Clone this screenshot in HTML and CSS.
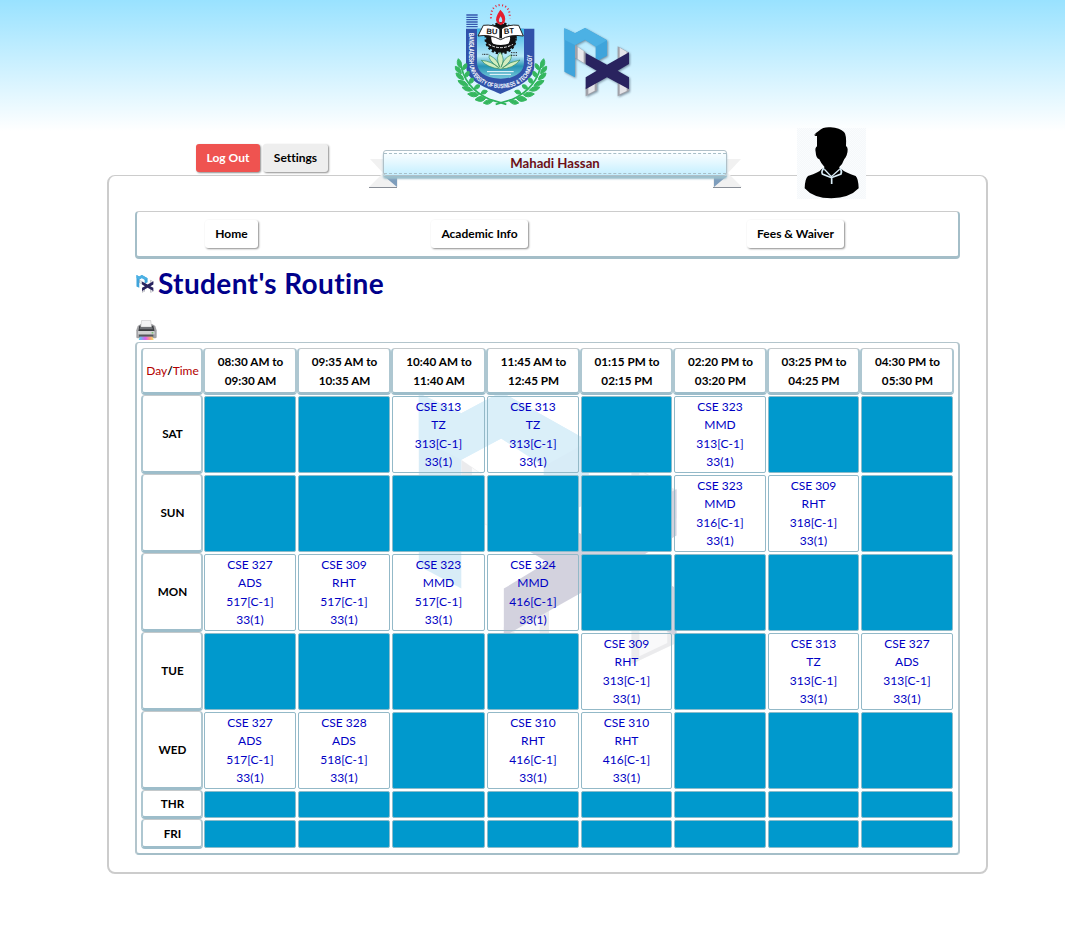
FILE: index.html
```
<!DOCTYPE html>
<html lang="en">
<head>
<meta charset="utf-8">
<title>Student's Routine</title>
<link rel="stylesheet" href="styles.css">
</head>
<body>
<svg class="defs" width="0" height="0" aria-hidden="true">
  <defs>
    <linearGradient id="silver"><stop offset="0" stop-color="#a5a5ad"/><stop offset=".55" stop-color="#f4f4f6"/><stop offset="1" stop-color="#aaaab2"/></linearGradient>
    <symbol id="nx" viewBox="18 17 196 207">
      <path fill="#a0a1a9" d="M50 68 82 90V125L50 106Z"/><path fill="#e9e9ec" d="M58 74 76 86V121L58 110Z"/>
      <path fill="#a0a1a9" d="M178 72 212 91V112L178 128ZM82 194 116 174V205L82 222ZM178 174 212 192V206L178 222Z"/>
      <path fill="#e4e4e8" d="M184 76 205 88V112L184 123ZM90 194 109 183V205L90 215ZM184 180 205 191V206L184 216Z"/>
      <path fill="#3fa4db" d="M18 18 50 33 80 17 146 54V100L112 118V72L80 52 50 68V165L18 148Z"/>
      <path fill="#4cb1e4" d="M18 18 50 33 80 17 146 54 112 73 80 52 50 68 18 52Z"/>
      <path fill="#29235f" d="M82 92 146 127 212 90V125L178 145 212 165V201L146 165 82 201V165L115 145 82 126Z"/>
    </symbol>
  </defs>
</svg>

<header class="banner">
  <svg class="crest" viewBox="0 0 294 330">
    <defs>
      <linearGradient id="sky" x2="0" y2="1"><stop offset="0" stop-color="#36b3e5"/><stop offset=".55" stop-color="#b9e9f8"/><stop offset=".75" stop-color="#2795b5"/><stop offset="1" stop-color="#75c7da"/></linearGradient>
      <path id="curve" d="M52 99V185C52 291 240 291 240 185V99"/>
    </defs>
    <g stroke="#3557ae" stroke-width="4"><path d="M43 45H77M43 52H77M43 59H77M43 66H77M43 73H77M43 80H77"/></g>
    <path fill="#3152aa" d="M42 86H247V195C247 243 199 258 145 282C91 258 42 243 42 195Z"/>
    <path fill="url(#sky)" d="M75 86H216V187C216 220 185 236 146 236S75 220 75 187Z"/>
    <circle cx="146" cy="115" r="36" fill="#fff" stroke="#111" stroke-width="15"/>
    <circle cx="146" cy="115" r="45" fill="none" stroke="#111" stroke-width="7" stroke-dasharray="7 6"/>
    <path fill="#111" d="M101 121Q146 149 192 121L187 139Q147 164 106 139Z"/>
    <path fill="none" stroke="#fff" stroke-width="3" stroke-dasharray="8 4" d="M110 133Q146 153 183 133"/>
    <path fill="#fff" stroke="#222" stroke-width="3" d="M94 76Q124 72 145 88Q169 72 200 76L214 108Q174 102 146 119Q114 102 78 108Z"/>
    <path stroke="#111" stroke-width="8" d="M146 85V115"/>
    <text class="crest-name" x="103" y="101" transform="rotate(4 104 99)">BU</text><text class="crest-name" x="156" y="102" transform="rotate(-4 156 100)">BT</text>
    <path fill="#d3edbf" stroke="#2f8a5c" stroke-width="2" d="M145 207Q105 203 88 181Q119 184 140 203Q105 178 112 165Q139 180 143 202Q129 169 145 157Q161 176 147 202Q155 174 178 164Q181 184 151 204Q175 184 204 180Q184 206 145 207Z"/>
    <path stroke="#f5fcff" stroke-width="3" d="M105 215H185M113 223H177"/>
    <path stroke="#222" stroke-width="3" stroke-dasharray="3 2" d="M91 163H110M177 158H197M177 166H195"/>
    <path fill="#e51d2f" d="M145 29Q165 48 158 67Q146 84 134 66Q127 55 145 29ZM146 49Q135 63 146 69Q156 63 146 49Z" fill-rule="evenodd"/>
    <path fill="none" stroke="#e82236" stroke-width="6" stroke-dasharray="3 7" d="M117 55Q115 18 145 15Q176 18 173 55"/>
    <g fill="none" stroke="#2cb35a" stroke-width="5"><path d="M25 185Q35 265 115 299L163 313M269 185Q257 265 179 299L131 313"/></g>
    <g id="leaves" fill="#35b75f" stroke="#35b75f" stroke-width="3">
      <path d="M25 204Q10 192 19 176Q33 187 25 204ZM28 221Q8 216 10 199Q28 203 28 221ZM35 239Q13 237 12 219Q32 221 35 239ZM48 257Q26 260 18 242Q39 238 48 257ZM62 271Q44 279 30 262Q50 254 62 271ZM80 284Q66 298 47 282Q65 270 80 284ZM101 295Q90 311 69 299Q83 282 101 295ZM31 211Q31 192 44 191Q48 205 31 211ZM38 232Q38 214 51 214Q55 230 38 232ZM51 250Q51 232 64 235Q68 250 51 250ZM67 267Q69 251 83 255Q83 269 67 267ZM87 281Q91 265 106 273Q102 285 87 281ZM122 303Q110 319 94 309Q105 295 122 303Z"/>
    </g>
    <use href="#leaves" transform="translate(294 0) scale(-1 1)"/>
    <text class="crest-motto"><textPath href="#curve" textLength="382" lengthAdjust="spacingAndGlyphs">BANGLADESH UNIVERSITY OF BUSINESS &amp; TECHNOLOGY</textPath></text>
  </svg>
  <svg class="brand"><use href="#nx"/></svg>
</header>

<div class="account">
  <button class="btn btn-danger">Log Out</button>
  <button class="btn btn-muted">Settings</button>
  <div class="ribbon">
    <svg class="ribbon-tails" viewBox="0 0 373 39">
      <path fill="#f1f1f1" d="M1 9H29V37H0L14 23ZM372 9H344V37H373L359 23Z"/>
      <path fill="#7e9dbc" d="M15 26H28V37ZM358 26H345V37Z"/>
      <path stroke="#888d96" d="M0 37.5H28M344 37.5H372"/>
    </svg>
    <div class="ribbon-face"><span>Mahadi Hassan</span></div>
  </div>
  <svg class="portrait" viewBox="0 0 207 213">
    <defs><pattern id="hatch" width="6" height="6" patternUnits="userSpaceOnUse"><path d="M0 0 6 6" stroke="#eaf0f4" stroke-width="1"/></pattern></defs>
    <path fill="#fafcfe" d="M0 0H207V213H0Z"/><path fill="url(#hatch)" d="M0 0H207V213H0Z"/>
    <path d="M51 22Q56 14 66 8Q79-4 101-2Q129 0 141 12Q149 20 147 54Q156 60 149 82Q145 91 142 93Q137 108 127 117V121L134 124Q144 134 176 144Q184 151 185 181Q158 210 103 211Q49 211 23 181Q24 151 33 144Q67 134 73 124L82 119V116Q72 107 67 94Q57 91 56 72Q53 60 60 55V24L52 24L58 19Z"/>
    <path fill="none" stroke="#dceff9" stroke-width="5" d="M81 120Q72 130 76 138L103 149 132 138Q136 130 129 121M104 148V168"/>
    <path fill="none" stroke="#dceff9" stroke-width="4" d="M82 124 103 146 128 124"/>
  </svg>
</div>

<main class="panel">
  <nav class="menu">
    <button class="btn btn-home">Home</button>
    <button class="btn btn-academic">Academic Info</button>
    <button class="btn btn-fees">Fees &amp; Waiver</button>
  </nav>
  <h1 class="title"><svg class="title-icon"><use href="#nx"/></svg><span>Student's Routine</span></h1>
  <svg class="printer" viewBox="0 0 63 60">
    <defs><linearGradient id="ink"><stop offset="0" stop-color="#48d7ec"/><stop offset=".45" stop-color="#d85df1"/><stop offset=".75" stop-color="#ff9980"/><stop offset="1" stop-color="#f5e95f"/></linearGradient></defs>
    <path fill="#a2a2a5" d="M5 18 15 12H48L58 18 62 31V51Q62 55 57 55H5Q1 55 1 51V31Z"/>
    <path fill="#3b3d41" d="M10 17H52L56 35H7Z"/><path fill="#f3f3f4" stroke="#999" d="M17 1H44L47 21H14Z"/>
    <path fill="#707276" d="M13 21H48L51 28H10Z"/><path fill="#d0d0d2" d="M6 33H56V43H6Z"/><path fill="#55575b" d="M9 44H52V50H9Z"/>
    <path fill="url(#ink)" d="M12 50H49L53 60H8Z"/><path fill="#58bd45" d="M47 37H52V40H47Z"/>
  </svg>
  <section class="schedule">
    <svg class="watermark"><use href="#nx"/></svg>
    <div class="grid">
      <div class="head"><span class="corner"><i>Day</i>/<i>Time</i></span></div>
      <div class="head">08:30 AM to<br>09:30 AM</div><div class="head">09:35 AM to<br>10:35 AM</div><div class="head">10:40 AM to<br>11:40 AM</div><div class="head">11:45 AM to<br>12:45 PM</div><div class="head">01:15 PM to<br>02:15 PM</div><div class="head">02:20 PM to<br>03:20 PM</div><div class="head">03:25 PM to<br>04:25 PM</div><div class="head">04:30 PM to<br>05:30 PM</div>

      <div class="head">SAT</div>
      <div class="free"></div><div class="free"></div><div class="slot">CSE 313<br>TZ<br>313[C-1]<br>33(1)</div><div class="slot">CSE 313<br>TZ<br>313[C-1]<br>33(1)</div><div class="free"></div><div class="slot">CSE 323<br>MMD<br>313[C-1]<br>33(1)</div><div class="free"></div><div class="free"></div>

      <div class="head">SUN</div>
      <div class="free"></div><div class="free"></div><div class="free"></div><div class="free"></div><div class="free"></div><div class="slot">CSE 323<br>MMD<br>316[C-1]<br>33(1)</div><div class="slot">CSE 309<br>RHT<br>318[C-1]<br>33(1)</div><div class="free"></div>

      <div class="head">MON</div>
      <div class="slot">CSE 327<br>ADS<br>517[C-1]<br>33(1)</div><div class="slot">CSE 309<br>RHT<br>517[C-1]<br>33(1)</div><div class="slot">CSE 323<br>MMD<br>517[C-1]<br>33(1)</div><div class="slot">CSE 324<br>MMD<br>416[C-1]<br>33(1)</div><div class="free"></div><div class="free"></div><div class="free"></div><div class="free"></div>

      <div class="head">TUE</div>
      <div class="free"></div><div class="free"></div><div class="free"></div><div class="free"></div><div class="slot">CSE 309<br>RHT<br>313[C-1]<br>33(1)</div><div class="free"></div><div class="slot">CSE 313<br>TZ<br>313[C-1]<br>33(1)</div><div class="slot">CSE 327<br>ADS<br>313[C-1]<br>33(1)</div>

      <div class="head">WED</div>
      <div class="slot">CSE 327<br>ADS<br>517[C-1]<br>33(1)</div><div class="slot">CSE 328<br>ADS<br>518[C-1]<br>33(1)</div><div class="free"></div><div class="slot">CSE 310<br>RHT<br>416[C-1]<br>33(1)</div><div class="slot">CSE 310<br>RHT<br>416[C-1]<br>33(1)</div><div class="free"></div><div class="free"></div><div class="free"></div>

      <div class="head">THR</div>
      <div class="free"></div><div class="free"></div><div class="free"></div><div class="free"></div><div class="free"></div><div class="free"></div><div class="free"></div><div class="free"></div>

      <div class="head">FRI</div>
      <div class="free"></div><div class="free"></div><div class="free"></div><div class="free"></div><div class="free"></div><div class="free"></div><div class="free"></div><div class="free"></div>
    </div>
  </section>
</main>
</body>
</html>
```
FILE: styles.css
```
* { box-sizing: border-box; }
body { margin: 0; height: 928px; background: #fff; font: 12px/18.25px Lato, "Open Sans", sans-serif; color: #000; font-variant-ligatures: none; }
.defs { position: absolute; }
.banner { display: flex; height: 131px; padding-left: 452px; background: linear-gradient(#99e2ff, #fff); }
.crest { width: 98px; height: 110px; flex: none; }
.crest-name { font: bold 23px "Liberation Sans", sans-serif; fill: #111; }
.crest-motto { font: bold 19px "Liberation Sans", sans-serif; fill: #fff; }
.brand { width: 66px; height: 69px; margin: 28px 0 0 14px; filter: drop-shadow(1px 1px 1px rgba(60,80,100,.6)); }
.account { position: relative; display: flex; gap: 3px; height: 44px; padding: 13px 0 0 196px; }
.btn { height: 28px; padding: 0 0 1px; border: 0; border-radius: 3px; background: #fff; box-shadow: 1px 1px 2px rgba(0,0,0,.45); font: bold 12px/27px Lato, sans-serif; color: #000; white-space: nowrap; font-variant-ligatures: none; }
.btn-danger { width: 64px; background: #ef5350; color: #fff; }
.btn-muted { width: 65px; background: #eee; }
.ribbon { position: absolute; left: 369px; top: 19px; width: 373px; height: 39px; }
.ribbon-tails { position: absolute; inset: 0; width: 373px; height: 39px; }
.ribbon-face { position: absolute; left: 14px; top: 0; width: 344px; height: 26px; padding: 2px 0; border: 1px solid #b0c0c8; border-radius: 3px; background: linear-gradient(#fff, #c5efff); box-shadow: 0 3px 2px #9bbfcc; }
.ribbon-face span { display: block; height: 21px; border: dashed #a8bfc8; border-width: 1px 0; text-align: center; font-weight: bold; font-size: 13.2px; line-height: 18px; color: #6d1016; }
.portrait { position: absolute; left: 797px; top: -3px; width: 69px; height: 71px; z-index: 1; overflow: visible; }
.panel { width: 881px; height: 699px; margin-left: 107px; padding: 35px 27px 0; border: 2px solid #ccc; border-top-width: 1px; border-radius: 8px; }
.menu { display: flex; height: 48px; width: 825px; margin-left: -1px; padding: 8px 0 0 68px; border: 1px solid #ccc; border-bottom: 3px solid #a4bec8; border-left: 2px solid #a4bec8; border-right: 2px solid #a4bec8; border-radius: 4px; }
.btn-home { width: 53px; }
.btn-academic { width: 97px; margin-left: 173px; }
.btn-fees { width: 97px; margin-left: 219px; }
.title { display: flex; align-items: center; gap: 4px; height: 50px; margin: 0; font-size: 28px; line-height: 48px; letter-spacing: .37px; color: #00008b; }
.title span { height: 50px; white-space: nowrap; }
.title-icon { width: 18px; height: 18px; }
.printer { display: block; width: 21px; height: 20px; margin: 11px 0 2px; }
.schedule { position: relative; width: 825px; height: 513px; margin-left: -1px; padding: 5px 0 0 4px; border: 1px solid #b3c5cc; border-width: 1px 2px 2px 2px; border-bottom-color: #a4bec8; border-radius: 4px; }
.watermark { position: absolute; left: 281px; top: 49px; width: 262px; height: 275px; opacity: .2; }
.grid { position: relative; display: grid; grid-template-columns: 62px 94px 94px 95px 94px 93px 94px 93px 94px; grid-template-rows: 47px repeat(5, 79px) 29px 30px; text-align: center; }
.head { display: flex; align-items: center; justify-content: center; padding-left: 1px; border: 1px solid; border-width: 1px 2px 3px 2px; border-color: #c4c9cb #aec7d1 #9dbdca #aec7d1; border-radius: 4px; background: #fff; font-weight: bold; font-size: 11.7px; }
.corner i { font-style: normal; font-weight: normal; font-size: 12px; color: #b30000; }
.slot { margin: 1px; padding-top: 1px; border: 1px solid #93b9c8; border-radius: 2px; color: #0000c4; }
.free { margin: 1px; border: 1px solid #8bbccb; border-radius: 2px; background: #0099cd; }
```
